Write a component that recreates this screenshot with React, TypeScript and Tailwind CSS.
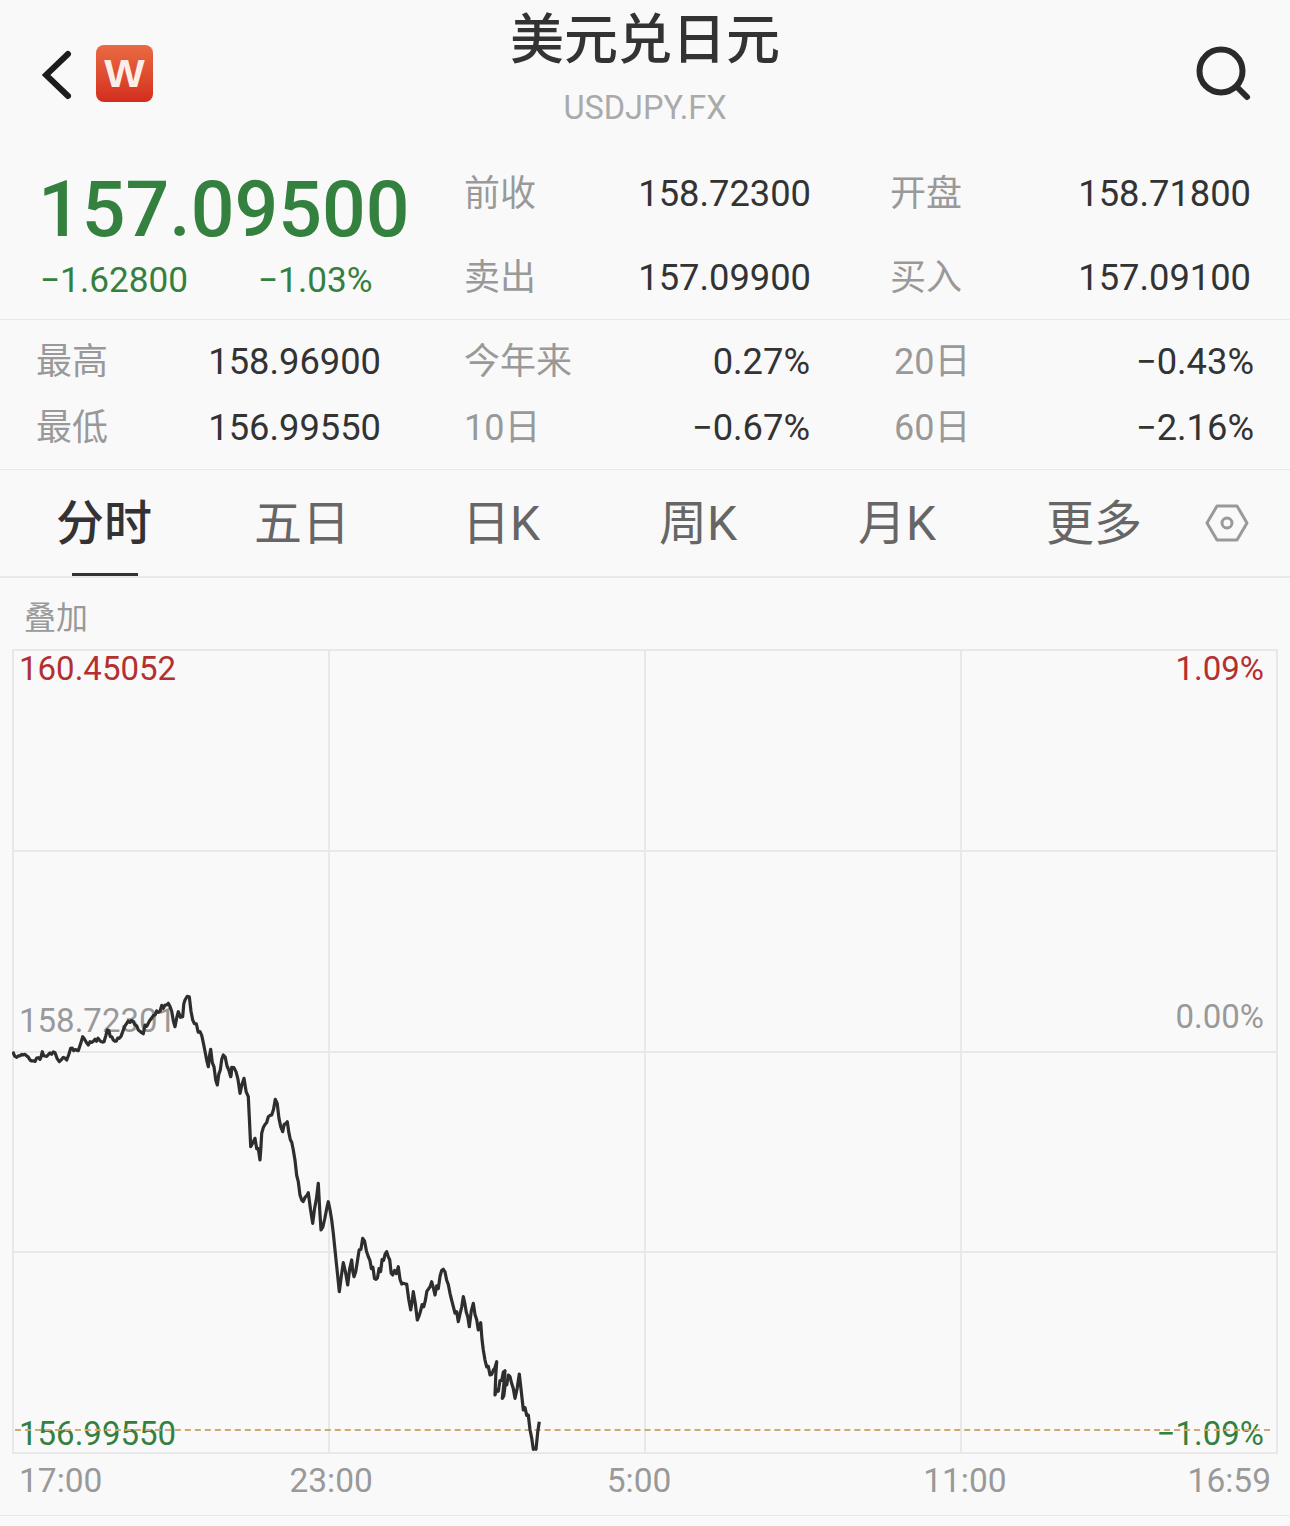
const a: number[][] = [[38,215],[50,232],[70,225],[90,240],[120,238],[127,215],[135,228],[165,218],[178,245],[190,232],[200,240],[212,205],[235,212],[248,170],[265,195],[285,178],[312,185],[322,150],[340,180],[358,175],[380,130],[400,125],[425,158],[465,105],[490,85],[505,70],[525,140],[535,95],[548,110],[555,60],[568,50],[578,120],[600,155],[625,260],[632,208],[652,315],[670,225],[692,290],[695,262],[708,275],[720,340],[732,295],[745,350],[752,500],[765,475],[780,540],[785,460],[805,410],[815,405],[826,358],[848,455],[862,425],[880,510]];
const b: number[][] = [[175,5],[185,60],[205,38],[218,130],[235,10],[243,150],[265,65],[275,120],[285,210],[298,335],[310,248],[323,315],[335,240],[342,290],[368,175],[385,230],[408,298],[440,215],[458,285],[475,260],[485,312],[500,312],[512,390],[520,335],[532,420],[575,305],[585,345],[610,268],[630,340],[655,425],[670,350],[688,440],[700,370],[715,450],[722,428],[730,510],[750,585],[770,545],[765,645],[795,572],[787,655],[805,585],[825,655],[838,582],[850,690],[865,705],[880,808],[888,808],[898,725]];
const raw: number[][] = [
  ...a.map(([x, y]) => [x / 3 - 12, 980 + y / 3 - 650]),
  ...b.map(([x, y]) => [240 + x / 3 - 12, 1180 + y / 3 - 650]),
];
const noise = (i: number) => {
  const s = Math.sin(i * 12.9898) * 43758.5453;
  return s - Math.floor(s) - 0.5;
};
const dense: number[][] = [];
raw.forEach((p, i) => {
  const q = raw[i + 1];
  dense.push(p);
  if (!q) return;
  const n = Math.max(2, Math.floor(Math.abs(q[0] - p[0]) / 1.5));
  for (let k = 1; k < n; k++) {
    const t = k / n;
    const amp = i < 22 ? 4 : 9;
    dense.push([p[0] + (q[0] - p[0]) * t, p[1] + (q[1] - p[1]) * t + noise(i * 31 + k) * amp]);
  }
});
const pts = dense.map(([x, y]) => `${x.toFixed(1)},${y.toFixed(1)}`).join(" ");

const sans = "font-['Roboto','Noto_Sans_CJK_SC',sans-serif]";

function Row({ l1, v1, l2, v2 }: { l1: string; v1: string; l2: string; v2: string }) {
  return (
    <div className="flex h-[84px] items-center">
      <span className="w-[174px] text-[36px] text-[#999]">{l1}</span>
      <span className="w-[173px] text-right text-[36.3px] text-[#333]">{v1}</span>
      <span className="ml-[79px] w-[170px] text-[36px] text-[#999]">{l2}</span>
      <span className="w-[191px] text-right text-[36.3px] text-[#333]">{v2}</span>
    </div>
  );
}

function TRow({ l1, v1, l2, v2, l3, v3 }: { l1: string; v1: string; l2: string; v2: string; l3: string; v3: string }) {
  return (
    <div className="flex h-[66px] items-center">
      <span className="w-[90px] text-[36px] text-[#999]">{l1}</span>
      <span className="w-[255px] text-right text-[36.3px] text-[#333]">{v1}</span>
      <span className="ml-[83px] w-[120px] whitespace-nowrap text-[36px] text-[#999]">{l2}</span>
      <span className="w-[226px] text-right text-[36.3px] text-[#333]">{v2}</span>
      <span className="ml-[84px] w-[100px] text-[36px] text-[#999]">{l3}</span>
      <span className="w-[260px] text-right text-[36.3px] text-[#333]">{v3}</span>
    </div>
  );
}

function Tab({ w, children, active }: { w: string; children: string; active?: boolean }) {
  return (
    <div className={`${w} relative flex h-full items-center justify-center pt-[2px] text-[48px] ${active ? "font-medium text-[#333]" : "text-[#666]"}`}>
      {children}
      {active && <div className="absolute bottom-0 left-[67px] h-[3px] w-[66px] bg-[#333]" />}
    </div>
  );
}

export default function App() {
  return (
    <div className={`${sans} h-[1526px] w-[1290px] overflow-hidden bg-[#f9f9f9]`}>
      {/* header */}
      <div className="flex h-[150px] items-start justify-between">
        <div className="flex w-[300px] items-center pl-[42px] pt-[45px]">
          <svg width="30" height="57" viewBox="0 0 30 57">
            <path d="M26 9 L4 30 L26 51" fill="none" stroke="#1c1c1c" strokeWidth="6" strokeLinecap="round" strokeLinejoin="miter" />
          </svg>
          <div className="ml-[24px] flex h-[57px] w-[57px] items-center justify-center rounded-[8px] bg-gradient-to-b from-[#e96a42] to-[#d32b1e] font-['Liberation_Sans',sans-serif] text-[39px] font-bold leading-none text-[#fbeee8]">
            <span className="scale-x-110">W</span>
          </div>
        </div>
        <div className="flex flex-col items-center">
          <div className="mt-[10px] text-[54px] font-medium leading-[62px] text-[#333]">美元兑日元</div>
          <div className="mt-[16px] text-[32.5px] leading-[40px] text-[#aaa]">USDJPY.FX</div>
        </div>
        <div className="flex w-[300px] justify-end pr-[36px] pt-[44px]">
          <svg width="60" height="60" viewBox="0 0 60 60">
            <circle cx="27" cy="27" r="21.5" fill="none" stroke="#2a2a2a" strokeWidth="6" />
            <path d="M43 43 L53 53" fill="none" stroke="#2a2a2a" strokeWidth="6" strokeLinecap="round" />
          </svg>
        </div>
      </div>

      {/* quote */}
      <div className="flex h-[170px] border-b border-[#e8e8e8]">
        <div className="w-[464px] pl-[38px]">
          <div className="mt-[14px] text-[77px] font-medium leading-[92px] text-[#33803f]">157.09500</div>
          <div className="mt-[2px] flex pl-[2px] text-[35.2px] leading-[44px] text-[#33803f]">
            <span className="w-[218px]">−1.62800</span>
            <span>−1.03%</span>
          </div>
        </div>
        <div className="pt-[2px]">
          <Row l1="前收" v1="158.72300" l2="开盘" v2="158.71800" />
          <Row l1="卖出" v1="157.09900" l2="买入" v2="157.09100" />
        </div>
      </div>

      {/* table */}
      <div className="h-[150px] border-b border-[#e8e8e8] pl-[36px] pt-[9px]">
        <TRow l1="最高" v1="158.96900" l2="今年来" v2="0.27%" l3="20日" v3="−0.43%" />
        <TRow l1="最低" v1="156.99550" l2="10日" v2="−0.67%" l3="60日" v3="−2.16%" />
      </div>

      {/* tabs */}
      <div className="flex h-[108px] items-center border-b-2 border-[#e8e8e8] pl-[5px]">
        <Tab w="w-[198px]" active>分时</Tab>
        <Tab w="w-[198px]">五日</Tab>
        <Tab w="w-[200px]">日K</Tab>
        <Tab w="w-[194px]">周K</Tab>
        <Tab w="w-[204px]">月K</Tab>
        <Tab w="w-[190px]">更多</Tab>
        <svg className="ml-[16px]" width="44" height="40" viewBox="0 0 44 40">
          <path d="M12 3 H32 L42 20 L32 37 H12 L2 20 Z" fill="none" stroke="#999" strokeWidth="3" strokeLinejoin="round" />
          <circle cx="22" cy="20" r="5" fill="none" stroke="#999" strokeWidth="3" />
        </svg>
      </div>

      {/* overlay */}
      <div className="flex h-[71px] items-center pt-[9px] pl-[24px] text-[32px] text-[#999]">叠加</div>

      {/* chart */}
      <div className="relative ml-[12px] h-[805px] w-[1266px]">
        <div className="grid h-full w-full grid-cols-4 grid-rows-4 border-l-2 border-t-2 border-[#e8e8e8]">
          {Array.from({ length: 16 }).map((_, i) => (
            <div key={i} className="border-b-2 border-r-2 border-[#e8e8e8]" />
          ))}
        </div>
        <span className="absolute left-[7px] top-[1px] text-[33px] leading-[38px] text-[#b33030]">160.45052</span>
        <span className="absolute right-[14px] top-[1px] text-[33px] leading-[38px] text-[#b33030]">1.09%</span>
        <span className="absolute left-[7px] top-[353px] text-[33px] leading-[38px] text-[#999]">158.72301</span>
        <span className="absolute right-[14px] top-[349px] text-[33px] leading-[38px] text-[#999]">0.00%</span>
        <span className="absolute left-[7px] top-[766px] text-[33px] leading-[38px] text-[#33803f]">156.99550</span>
        <span className="absolute right-[14px] top-[766px] text-[33px] leading-[38px] text-[#33803f]">−1.09%</span>
        <div className="absolute left-[3px] right-[8px] top-[780px] border-t-2 border-dashed border-[#cfa873]" />
        <svg className="absolute left-0 top-[1px]" width="1266" height="805" viewBox="0 0 1266 805">
          <polyline points={pts} fill="none" stroke="#2e2e2e" strokeWidth="3.2" strokeLinejoin="round" />
        </svg>
      </div>

      {/* time axis */}
      <div className="flex h-[62px] items-center justify-between border-b border-[#e8e8e8] pb-[6px] text-[33.5px] text-[#999]">
        <span className="ml-[19px] w-[270px]">17:00</span>
        <span className="w-[317px]">23:00</span>
        <span className="w-[316px]">5:00</span>
        <span className="w-[264px]">11:00</span>
        <span className="mr-[19px]">16:59</span>
      </div>
    </div>
  );
}
